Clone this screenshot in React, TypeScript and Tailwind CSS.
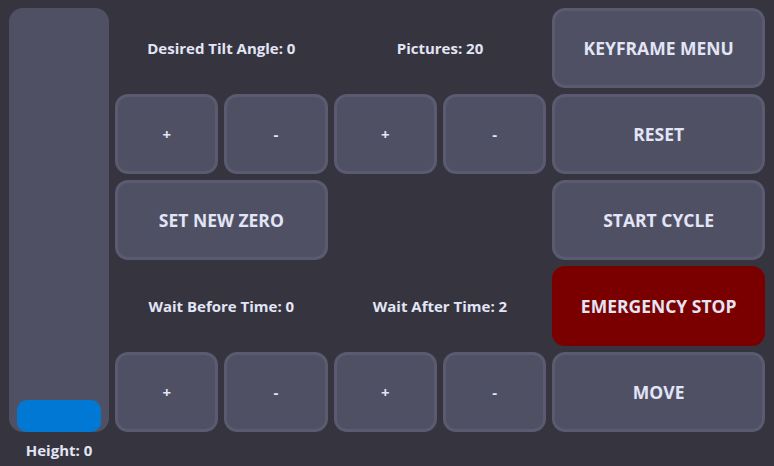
import React from 'react';

const btn =
  'flex items-center justify-center rounded-[13px] border-[3px] border-[#5a5a70] bg-[#505065] text-[#e2e5f5] font-bold';

function Label({ text }: { text: string }) {
  return (
    <div className="col-span-2 flex items-center justify-center pt-[1px] text-[15px] font-bold text-[#e2e5f5]">
      {text}
    </div>
  );
}

function Small({ text }: { text: string }) {
  return <button className={`${btn} text-[15px]`}>{text}</button>;
}

function Big({ text, danger = false }: { text: string; danger?: boolean }) {
  return (
    <button
      className={
        danger
          ? 'col-span-2 flex items-center justify-center rounded-[13px] bg-[#7a0000] text-[#e2e5f5] font-bold text-[17.5px]'
          : `${btn} col-span-2 text-[17.5px]`
      }
    >
      {text}
    </button>
  );
}

export default function App() {
  const height = 0;
  return (
    <div
      className="flex h-[466px] w-[774px] gap-[6px] bg-[#35343f] pl-[9px] pr-[9px] pt-[8px]"
      style={{ fontFamily: '"Open Sans", "Noto Sans", sans-serif' }}
    >
      {/* height slider */}
      <div className="flex w-[100px] flex-col">
        <div className="flex h-[424px] flex-col justify-end rounded-[14px] bg-[#505065] px-[8px]">
          <div className="h-[32px] rounded-[10px] bg-[#0078d4]" />
        </div>
        <div className="flex flex-1 items-center justify-center pt-[2px] text-[15px] font-bold text-[#e2e5f5]">
          Height: {height}
        </div>
      </div>

      <div className="grid flex-1 grid-cols-6 grid-rows-[repeat(5,80px)] gap-[6px]">
        <Label text="Desired Tilt Angle: 0" />
        <Label text="Pictures: 20" />
        <Big text="KEYFRAME MENU" />

        <Small text="+" />
        <Small text="-" />
        <Small text="+" />
        <Small text="-" />
        <Big text="RESET" />

        <Big text="SET NEW ZERO" />
        <div className="col-span-2" />
        <Big text="START CYCLE" />

        <Label text="Wait Before Time: 0" />
        <Label text="Wait After Time: 2" />
        <Big text="EMERGENCY STOP" danger />

        <Small text="+" />
        <Small text="-" />
        <Small text="+" />
        <Small text="-" />
        <Big text="MOVE" />
      </div>
    </div>
  );
}
